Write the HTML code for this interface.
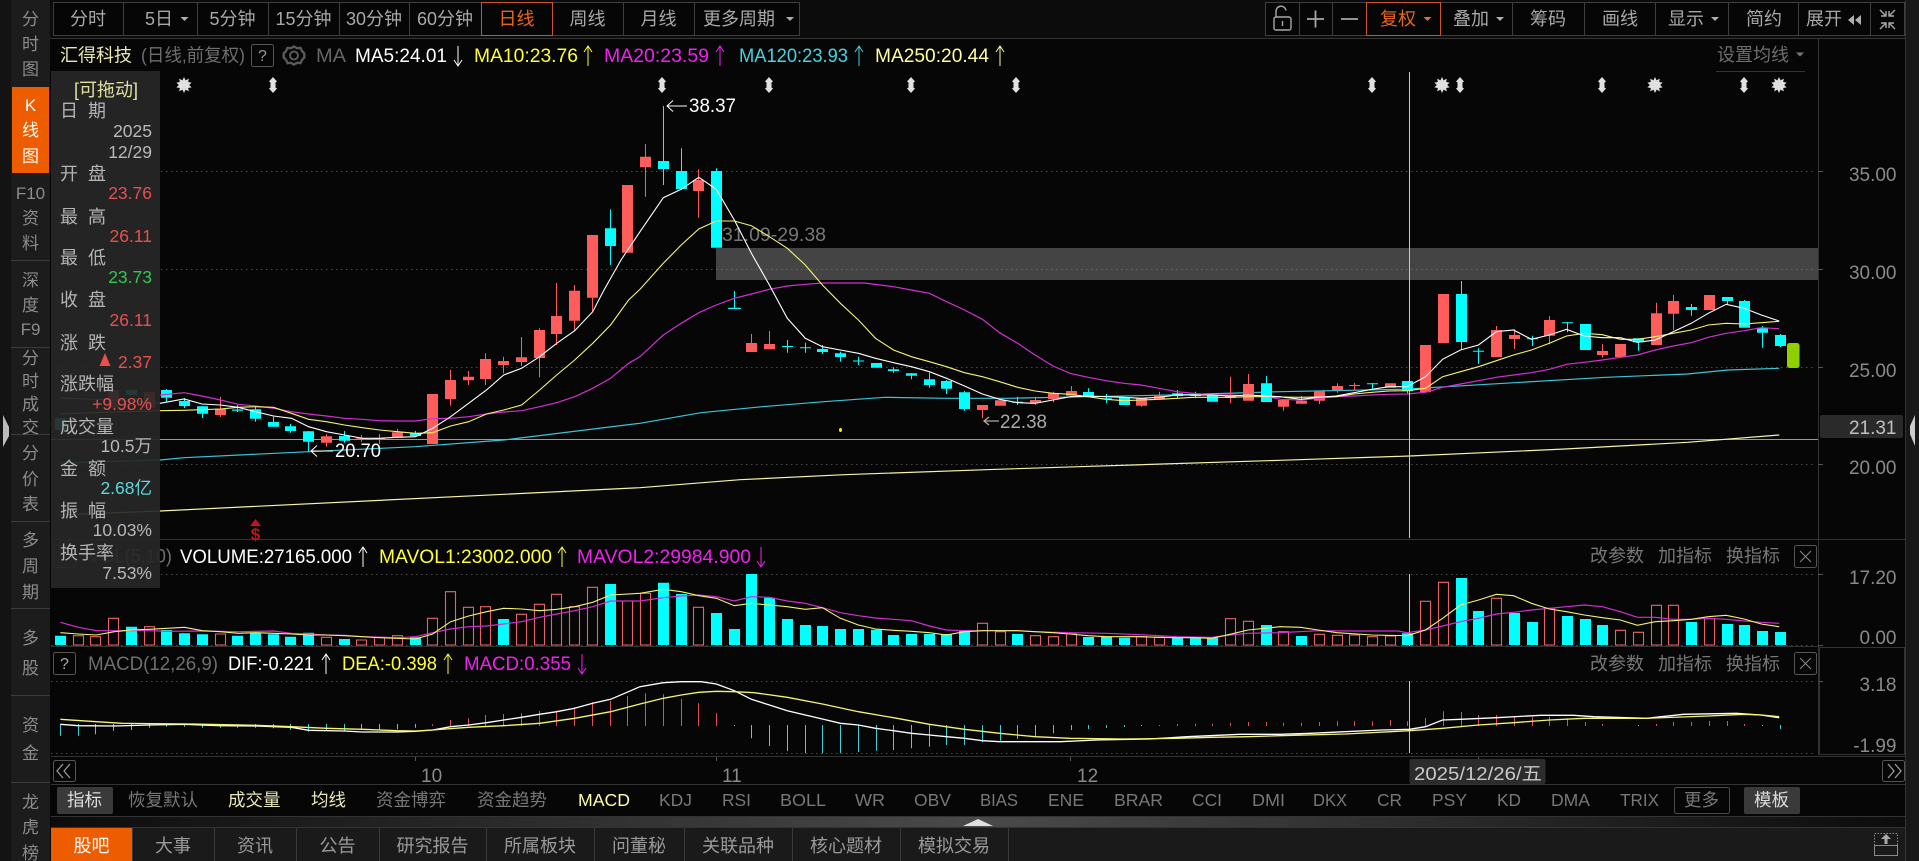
<!DOCTYPE html>
<html lang="zh"><head><meta charset="utf-8"><title>汇得科技 K线图</title>
<style>html,body{margin:0;padding:0;background:#060606;overflow:hidden;width:1919px;height:861px}svg{display:block;font-family:"Liberation Sans","Noto Sans CJK SC",sans-serif}</style></head>
<body>
<svg xmlns="http://www.w3.org/2000/svg" width="1919" height="861" viewBox="0 0 1919 861">
<defs>
<linearGradient id="gs" x1="0" x2="1" y1="0" y2="0"><stop offset="0" stop-color="#0c0c0c"/><stop offset=".5" stop-color="#4a4a4a"/><stop offset="1" stop-color="#0c0c0c"/></linearGradient>
<path id="up" fill="none" d="M0-10V10M-4-4L0-10L4-4"/>
<path id="dn" fill="none" d="M0-10V10M-4 4L0 10L4 4"/>
<path id="star" fill="#e0e0e0" d="M0-8L1.6-4.6L4.8-6.4L4.2-3L7.6-2.4L5.2 0L7.6 2.4L4.2 3L4.8 6.4L1.6 4.6L0 8L-1.6 4.6L-4.8 6.4L-4.2 3L-7.6 2.4L-5.2 0L-7.6-2.4L-4.2-3L-4.8-6.4L-1.6-4.6Z"/>
<path id="ud" fill="#e0e0e0" d="M0-8L4-3.5L2.5-2.5V2.5L4 3.5L0 8L-4 3.5L-2.5 2.5V-2.5L-4-3.5Z"/>
</defs>
<rect width="1919" height="861" fill="#060606"/>
<!-- left strip & sidebar -->
<rect x="0" y="0" width="11" height="861" fill="#131313"/>
<rect x="11" y="0" width="39" height="861" fill="#1c1c1c"/>
<rect x="12" y="87" width="37" height="86" fill="#ee5c00"/>
<path stroke="#3c3c3c" d="M11 260.5H50M11 347.5H50M11 434.5H50M11 521.5H50M11 608.5H50M11 695.5H50M11 782.5H50"/>
<path fill="#bbb" d="M3 415L9 427V436L3 447Z"/>
<g font-size="17" fill="#8c8c8c" text-anchor="middle">
<text x="30.5" y="25">分</text><text x="30.5" y="50">时</text><text x="30.5" y="75">图</text>
<g fill="#fff"><text x="30.5" y="111">K</text><text x="30.5" y="136">线</text><text x="30.5" y="162">图</text></g>
<text x="30.5" y="199">F10</text><text x="30.5" y="224">资</text><text x="30.5" y="249">料</text>
<text x="30.5" y="286">深</text><text x="30.5" y="311">度</text><text x="30.5" y="335">F9</text>
<text x="30.5" y="364">分</text><text x="30.5" y="387">时</text><text x="30.5" y="410">成</text><text x="30.5" y="433">交</text>
<text x="30.5" y="459">分</text><text x="30.5" y="485">价</text><text x="30.5" y="510">表</text>
<text x="30.5" y="546">多</text><text x="30.5" y="572">周</text><text x="30.5" y="598">期</text>
<text x="30.5" y="644">多</text><text x="30.5" y="674">股</text>
<text x="30.5" y="731">资</text><text x="30.5" y="759">金</text>
<text x="30.5" y="808">龙</text><text x="30.5" y="833">虎</text><text x="30.5" y="859">榜</text>
</g>
<!-- top toolbar -->
<rect x="50" y="0" width="1855" height="38" fill="#0c0c0c"/>
<path stroke="#343434" d="M50 38.5H1905M1905.5 0V861"/>
<rect x="1906" y="0" width="13" height="861" fill="#181818"/>
<path fill="#ccc" d="M1915 415L1910 426V434L1915 446Z"/>
<g fill="#060606" stroke="#3e3e3e">
<rect x="53.5" y="2.5" width="70" height="33"/><rect x="123.5" y="2.5" width="74" height="33"/><rect x="197.5" y="2.5" width="71" height="33"/><rect x="268.5" y="2.5" width="71" height="33"/><rect x="339.5" y="2.5" width="70" height="33"/><rect x="409.5" y="2.5" width="72" height="33"/><rect x="552.5" y="2.5" width="71" height="33"/><rect x="623.5" y="2.5" width="71" height="33"/><rect x="694.5" y="2.5" width="105" height="33"/>
<rect x="1265.5" y="2.5" width="34" height="33"/><rect x="1299.5" y="2.5" width="33" height="33"/><rect x="1332.5" y="2.5" width="34" height="33"/><rect x="1440.5" y="2.5" width="72" height="33"/><rect x="1512.5" y="2.5" width="72" height="33"/><rect x="1584.5" y="2.5" width="71" height="33"/><rect x="1655.5" y="2.5" width="73" height="33"/><rect x="1728.5" y="2.5" width="70" height="33"/><rect x="1798.5" y="2.5" width="72" height="33"/><rect x="1870.5" y="2.5" width="34" height="33"/>
</g>
<rect x="481.5" y="2.5" width="71" height="33" fill="#060606" stroke="#c9581e"/>
<rect x="1366.5" y="2.5" width="74" height="33" fill="#060606" stroke="#c9581e"/>
<g font-size="18" fill="#a8a8a8" text-anchor="middle">
<text x="88" y="25">分时</text><text x="159" y="25">5日</text><text x="232.5" y="25">5分钟</text><text x="303.5" y="25">15分钟</text><text x="374" y="25">30分钟</text><text x="445" y="25">60分钟</text>
<text x="516.5" y="25" fill="#e8661a">日线</text><text x="587.5" y="25">周线</text><text x="658.5" y="25">月线</text><text x="739" y="25">更多周期</text>
<text x="1398" y="25" fill="#e8661a">复权</text><text x="1471" y="25">叠加</text><text x="1548" y="25">筹码</text><text x="1620" y="25">画线</text><text x="1686" y="25">显示</text><text x="1764" y="25">简约</text><text x="1824" y="25">展开</text>
</g>
<g fill="#b0b0b0">
<path d="M180.5 17h8l-4 4zM786 17h8l-4 4zM1496 17h8l-4 4zM1711 17h8l-4 4z"/>
<path fill="#ee7020" d="M1423.5 17h8l-4 4z"/>
<path d="M1854 15v10l-6-5zM1861 15v10l-6-5z"/>
</g>
<!-- lock, + - collapse -->
<g fill="none" stroke="#a8a8a8" stroke-width="1.4">
<rect x="1274" y="17" width="17" height="13" rx="2"/><path d="M1276 17v-5a5 5 0 0 1 10-1.5M1282.5 21v5"/>
<path stroke-width="1.8" d="M1307 19h17M1315.5 10.5v17M1341 19h17"/>
<path d="M1880 10l6 6M1886 11v5h-5M1895 10l-6 6M1889 11v5h5M1880 29l6-6M1886 28v-5h-5M1895 29l-6-6M1889 28v-5h5"/>
</g>
<!-- title row -->
<text x="60" y="61.5" font-size="18" fill="#e8e8b4">汇得科技</text>
<text x="141" y="61.5" font-size="18" fill="#6e6e6e" textLength="104" lengthAdjust="spacingAndGlyphs">(日线,前复权)</text>
<rect x="251.5" y="44.5" width="22" height="22" rx="2" fill="none" stroke="#555"/>
<text x="262.5" y="61" font-size="16" fill="#999" text-anchor="middle">?</text>
<g fill="none" stroke="#5a5a5a" stroke-width="2"><circle cx="294" cy="55.5" r="4"/><path stroke-width="2.4" d="M294 46.5l3 1.7 3.5-.3 1.500 3.200 2.300 2.400v4l-2.300 2.400-1.500 3.200-3.500-.3-3 1.700-3-1.700-3.500.3-1.500-3.200-2.300-2.400v-4l2.300-2.400 1.500-3.200 3.500.3z"/></g>
<g font-size="19">
<text x="316" y="62" fill="#666" textLength="30" lengthAdjust="spacingAndGlyphs">MA</text>
<text x="355" y="62" fill="#fff" textLength="92" lengthAdjust="spacingAndGlyphs">MA5:24.01</text>
<text x="474" y="62" fill="#ffff33" textLength="104" lengthAdjust="spacingAndGlyphs">MA10:23.76</text>
<text x="604" y="62" fill="#ee22ee" textLength="105" lengthAdjust="spacingAndGlyphs">MA20:23.59</text>
<text x="739" y="62" fill="#44d4e4" textLength="109" lengthAdjust="spacingAndGlyphs">MA120:23.93</text>
<text x="875" y="62" fill="#ffffa0" textLength="114" lengthAdjust="spacingAndGlyphs">MA250:20.44</text>
</g>
<use href="#dn" x="458" y="56" stroke="#fff"/><use href="#up" x="588" y="56" stroke="#ffff33"/><use href="#up" x="720" y="56" stroke="#ee22ee"/><use href="#up" x="859" y="56" stroke="#44d4e4"/><use href="#up" x="1000" y="56" stroke="#ffffa0"/>
<text x="1717" y="61" font-size="18" fill="#6e6e6e">设置均线</text>
<path fill="#777" d="M1796 52.500h8l-4 4z"/><path stroke="#333" d="M1716 71.500H1805"/>
<!-- axis frames -->
<path stroke="#333" d="M1818.500 38V755M51 539.500H1905M51 646.500H1818M51 756.500H1905M51 784.500H1905M51 816.500H1905M51 827.500H1905"/>
<rect x="1819.500" y="647.500" width="85" height="107" fill="none" stroke="#333"/>
<!-- grid -->
<path stroke="#4a4a4a" stroke-dasharray="1.500 3.500" d="M51 171.500H1816M51 269.500H1816M51 367.500H1816M51 464.500H1816M51 574.500H1816M51 645.500H1816M51 681.500H1816M51 753.500H1816"/>
<path stroke="#555" d="M1818 171.500h5M1818 269.500h5M1818 367.500h5M1818 464.500h5M1818 574.500h5M1818 645.500h5M1818 681.500h5"/>
<!-- zone -->
<rect x="716" y="248" width="1102" height="32" fill="#444"/>
<path stroke="#666" stroke-dasharray="1.500 3.500" d="M716 269.500H1816"/>
<text x="722" y="241" font-size="19" fill="#777" textLength="104" lengthAdjust="spacingAndGlyphs">31.09-29.38</text>
<!-- MA250 + MA120 + hline -->
<path stroke="#9a9a9a" stroke-width="1" d="M51 439.500H1818"/>
<polyline fill="none" stroke="#f4f4a8" stroke-width="1.200" points="60.400,515 160,511 640,487.700 740,479.700 844,474.700 997,469.300 1079,466.700 1280,460.300 1409.600,456 1565,449 1687.500,442.300 1779.200,435"/>
<polyline fill="none" stroke="#3cc4d6" stroke-width="1.200" points="60.400,463 160,460 184,457.700 308.600,451.700 415.500,446.700 503.700,440 640,423.300 701,412.700 762.400,406.700 823.700,401.700 885,397.300 946,398.300 1007,398.300 1089,396.700 1170.600,395 1280,391.700 1402,389.300 1504,383.300 1606,377.300 1687.500,374 1728,370 1779.200,368.300"/>
<!-- hidden candles beneath translucent panel -->
<path fill="none" stroke="#00ffff" stroke-width="11" d="M60.500 418V430M131.500 390V395"/>
<path fill="none" stroke="#ff5c5c" stroke-width="11" d="M113.500 390V408M149.500 392V408"/>
<polyline fill="none" stroke="#c0c0c0" stroke-width="1" points="60.400,398 113,400 160,403.300"/>
<polyline fill="none" stroke="#f4f470" stroke-width="1" points="60.400,414 113,412 160,410.700"/>
<!-- candles -->
<path fill="none" stroke="#00ffff" stroke-width="1" d="M166.500 389V402M184.500 398V408M202.500 406V418M237.500 405V412M255.500 406.700V421.700M273.500 416.700V426.700M290.500 424V432.700M308.500 431V451.700M344.500 431V442.700M415.500 431V436.700M610.500 209.300V265M663.500 106V185M681.500 148.300V190M716.500 168.300V172M734.500 291V308M787.500 340V352.700M805.500 342.700V352.700M822.500 345V354M840.500 351.700V361.700M858.500 356.700V365M893.500 367.300V372.700M911.500 373V379.300M929.500 372.700V387.700M946.500 380V394M964.500 391V410.700M1017.500 396.700V405M1088.500 388.300V393M1106.500 394V403.300M1177.500 390V398.300M1195.500 391.700V398.300M1266.500 376V384M1372.500 383V390M1407.500 381V393.300M1461.500 281V350M1478.500 348.300V364M1532.500 335.700V346M1567.500 322V332.300M1638.500 342V350.700M1691.500 304V315.700M1727.500 301V304M1744.500 300V302M1762.500 326V347.700M1780.500 334V347"/>
<path fill="none" stroke="#ff5c5c" stroke-width="1" d="M220.500 397V417M326.500 434.300V446.700M361.500 435V441.700M379.500 434V444M397.500 429V438.300M450.500 370V405.700M468.500 371V385M485.500 353.300V385M503.500 356.700V373.300M521.500 337V366M539.500 328.300V377.300M556.500 283V345M574.500 285V330.700M592.500 297V311.700M645.500 144V196.700M698.500 169.300V217.700M751.500 334V343M769.500 331V344M982.500 410V418.300M1035.500 396.700V405M1053.500 391.700V402.300M1071.500 386V391M1141.500 405V406.700M1159.500 391.700V400M1230.500 376.700V403.300M1248.500 374V384M1283.500 406V410.700M1301.500 396V404M1319.500 400V404M1337.500 383.300V392.700M1354.500 382.700V390.700M1496.500 326V330M1514.500 329.300V349M1549.500 316V344.300M1602.500 344V357.700M1656.500 302.700V314M1673.500 295V330"/>
<path fill="none" stroke="#00ffff" stroke-width="11" d="M166.500 390V397.700M184.500 401V406M202.500 406.300V413.700M237.500 409.500V410.700M255.500 409.300V418.700M273.500 422V426.700M290.500 426.300V431M308.500 431.300V441.700M344.500 436V440.700M415.500 433.300V436M610.500 228.300V246M663.500 161V169M681.500 171V189M716.500 171V247.700M734.500 307.700V308.700M787.500 346V347M805.500 347.300V348.300M822.500 349V352M840.500 353.300V357M858.500 360.500V361.500M876.500 363V367.700M893.500 369.300V371M911.500 373.300V375.700M929.500 379.300V385M946.500 381V388.700M964.500 392.300V409M1017.500 401.700V402.700M1088.500 392V396.700M1106.500 398.300V399.300M1124.500 397.300V405M1177.500 393.300V396M1195.500 395V396M1212.500 395V401.700M1266.500 383.300V402M1372.500 383.300V384.300M1407.500 381V391.300M1461.500 294V342M1478.500 350.700V351.700M1532.500 338.300V339.300M1567.500 322.300V323.300M1585.500 324V350M1638.500 338.300V342.300M1691.500 307V310M1727.500 297V301M1744.500 301V327.700M1762.500 327.700V332.700M1780.500 335V346"/>
<path fill="none" stroke="#ff5c5c" stroke-width="11" d="M220.500 408.700V415M326.500 436.300V442.700M361.500 438.300V439.700M379.500 438.300V439.700M397.500 432.300V437.300M432.500 394V444M450.500 380V399M468.500 376.700V380.300M485.500 359V379M503.500 361V365M521.500 357.300V362M539.500 330V358M556.500 316V334M574.500 290.700V320.700M592.500 235V297.700M627.500 185V252.700M645.500 156.700V167.300M698.500 180V191M751.500 343V352M769.500 344V349.300M982.500 405V410M1000.500 400.300V405.700M1035.500 400V403M1053.500 393.300V399.300M1071.500 391V395.700M1141.500 398.300V405.700M1159.500 396V399M1230.500 396V398M1248.500 384V400.700M1283.500 400V406.700M1301.500 400.700V403.700M1319.500 391V400.700M1337.500 386V390M1354.500 385V386M1390.500 383.300V387.700M1425.500 345V392.300M1443.500 294V343M1496.500 330V357M1514.500 335V339M1549.500 320V335.700M1602.500 351V355M1620.500 344V357M1656.500 313.300V345M1673.500 301V313.700M1709.500 295V310"/>
<path stroke="#00ffff" stroke-width="1" fill="none" d="M728 308.500H741"/>
<rect x="1787" y="343" width="12.500" height="25" rx="2.500" fill="#90d000"/>
<!-- MA20, MA10, MA5 -->
<polyline fill="none" stroke="#d030d0" stroke-width="1.200" points="160,395 184,392.700 202,396 220.400,400 238.400,404.300 255.500,406 273.500,408.300 291.400,411.700 308.600,414 326.500,416 344.500,418.300 362.400,419.300 379.600,420.700 397.600,421 415.500,421 432.700,418.700 450.600,418.300 468.600,416.700 486.500,414 503.700,412 521.600,410.700 539.600,406.700 556.700,402.700 574.700,396.700 592.700,388.300 610.600,378.300 628.600,363.300 640,356.700 663.300,335 681.200,323.300 698.800,312.700 716.300,305 734.300,298.300 751.400,294 769.400,289.300 787.300,286 805.300,284.300 822.400,283 840.400,283 864.500,283 893.500,286.700 911.400,290 929.400,293.300 946.500,301.700 964.500,310 982.400,319.300 999.600,332.700 1017.600,343.300 1035,355 1053,366 1070,373.300 1088,377.300 1106,380.700 1124,383.300 1141,385 1159,388.300 1177,391.700 1194,393.300 1212,395 1230,395 1248,396 1265,396 1280,399.300 1301,400 1318,398.300 1336,396.700 1354,396 1372,395 1389,394.300 1407,394 1425.500,392.300 1442.600,387.300 1460.500,384 1478.500,380.700 1496.400,377.300 1513.500,375 1531.400,372.700 1549.400,369.300 1566.500,364.300 1584.400,362.300 1602.300,360 1620.300,357.300 1637.400,355 1655.300,350 1673.200,346 1691.200,342.700 1708.300,337.300 1726.200,333.300 1744.100,330.700 1761.300,327.700 1779.200,328.700"/>
<polyline fill="none" stroke="#f4f470" stroke-width="1.100" points="160,410.700 184,410.300 220.400,409 238.400,407.300 255.500,406.700 273.500,407.300 291.400,413.300 308.600,419.300 326.500,421.700 344.500,425 362.400,427.700 379.600,430 397.600,431.700 415.500,433.300 432.700,432.700 450.600,426 468.600,421.700 486.500,414 503.700,410 521.600,405 539.600,390 556.700,375 574.700,360 592.700,343.300 610.600,325 628.600,300 640,289.300 663.300,263.300 681.200,245 698.800,229 716.300,221 734.300,221 751.400,225.700 769.400,236.700 787.300,248.300 805.300,265 822.400,285 840.400,303.300 858.400,320 875.500,338.300 893.500,350 911.400,356.700 929.400,361.700 946.500,366.700 964.500,372.700 982.400,376.700 999.600,381.700 1017.600,387.300 1035,391 1053,393.300 1070,394.300 1088,396.700 1106,399.300 1124,400.700 1141,400 1159,399.300 1177,398.300 1194,397.300 1212,397.300 1230,397.300 1248,396.700 1265,396.700 1280,397 1301,397.300 1336,396.700 1354,394 1372,392.300 1389,391 1407,390.700 1425.500,388.300 1442.600,376.700 1460.500,371.700 1478.500,366.700 1496.400,360.700 1513.500,355 1531.400,350 1549.400,343.300 1566.500,336 1584.400,333.300 1602.300,334.700 1620.300,339.300 1637.400,339.300 1655.300,336.700 1673.200,333.300 1691.200,330 1708.300,325 1726.200,323.300 1744.100,324 1761.300,322.700 1779.200,321.300"/>
<polyline fill="none" stroke="#ffffff" stroke-width="1.100" points="160,403.300 184,399 202,404 220.400,405 238,407.300 255.500,411.700 273.500,416 291.500,418.300 308.600,426.700 326.500,431.700 344.500,435 362.400,438.300 379.600,438.300 397.600,437.300 415.500,436.700 432.700,428.300 450.600,416.700 468.600,403.300 486.500,390 503.700,375 521.600,368.300 539.600,356.700 556.700,343.300 574.700,330.700 592.700,311.700 604,290 621,260 640,231.700 663.300,197.700 681.200,189.300 698.800,177.300 716.300,189.300 734.300,220 751.400,253.300 769.400,285 787.300,318.300 805.300,338.300 822.400,346.700 840.400,350 858.400,353.300 875.500,358.300 893.500,362.700 911.400,366.700 929.400,371.700 946.500,378.300 964.500,386 982.400,394 999.600,399.300 1017.600,402.700 1035,403.300 1053,400 1070,396.700 1088,396 1106,396.700 1124,397.300 1141,398.300 1159,397.300 1177,395 1194,395 1212,395 1230,396 1248,395 1265,396 1280,396.700 1301,399.300 1318,397.300 1336,396 1354,392.700 1372,389.300 1389,386.700 1407,386.700 1425.500,376.700 1442.600,359.300 1460.500,350 1478.500,345 1496.400,331.700 1513.500,330 1531.400,339.300 1549.400,335 1566.500,329.300 1584.400,336 1602.300,337.700 1620.300,337.700 1637.400,342.300 1655.300,340 1673.200,331.700 1691.200,323.300 1708.300,313.300 1726.200,304.300 1744.100,308.300 1761.300,315 1779.200,321"/>
<!-- crosshair -->
<path stroke="#c8c8c8" d="M1409.500 72V538M1409.500 574V646M1409.500 681V753"/>
<!-- markers -->
<use href="#star" x="184" y="85"/><use href="#ud" x="273" y="85"/><use href="#ud" x="662" y="85"/><use href="#ud" x="769" y="85"/><use href="#ud" x="911" y="85"/><use href="#ud" x="1016" y="85"/><use href="#ud" x="1372" y="85"/><use href="#star" x="1442" y="85"/><use href="#ud" x="1460" y="85"/><use href="#ud" x="1602" y="85"/><use href="#star" x="1655" y="85"/><use href="#ud" x="1744" y="85"/><use href="#star" x="1779" y="85"/>
<!-- labels -->
<g fill="none" stroke="#fff"><path d="M687 106H667M673 100.500L667 106L673 111.500"/><path d="M333 451H311M317 445.500L311 451L317 456.500"/></g>
<path fill="none" stroke="#aaa" stroke-width="1.300" d="M999 421H984M989 417L984 421L989 425"/>
<text x="689" y="112" font-size="19" fill="#fff" textLength="47" lengthAdjust="spacingAndGlyphs">38.37</text>
<text x="335" y="457" font-size="19" fill="#fff" textLength="46" lengthAdjust="spacingAndGlyphs">20.70</text>
<text x="1000" y="428" font-size="19" fill="#aaa" textLength="47" lengthAdjust="spacingAndGlyphs">22.38</text>
<ellipse cx="840.500" cy="430" rx="1.500" ry="2" fill="#ffee00"/>
<path fill="#cc1111" d="M255.500 519L261 526H250Z"/><text x="255.500" y="540" font-size="17" font-weight="bold" fill="#cc1111" text-anchor="middle">$</text>
<!-- axis labels -->
<g font-size="19" fill="#8a8a8a" text-anchor="end">
<text x="1896.500" y="181">35.00</text><text x="1896.500" y="279">30.00</text><text x="1896.500" y="377">25.00</text><text x="1896.500" y="474">20.00</text>
<text x="1896.500" y="584">17.20</text><text x="1896.500" y="644">0.00</text><text x="1896.500" y="691">3.18</text><text x="1896.500" y="752">-1.99</text>
</g>
<rect x="1820" y="415" width="83" height="23" rx="2" fill="#2a2a2a"/>
<text x="1896.500" y="434" font-size="19" fill="#c0c0c0" text-anchor="end">21.31</text>
<!-- vol pane -->
<path fill="none" stroke="#00ffff" stroke-width="11" d="M60.500 645V635.700M131.500 645V626.700M166.500 645V630M184.500 645V633.300M202.500 645V634.300M237.500 645V635.700M255.500 645V632.700M273.500 645V634.300M290.500 645V636.700M308.500 645V632.700M344.500 645V639M415.500 645V637.300M503.500 645V619M610.500 645V584M663.500 645V582.700M681.500 645V594M716.500 645V613M734.500 645V629M751.500 645V574M769.500 645V597.700M787.500 645V619M805.500 645V625M822.500 645V626M840.500 645V629M858.500 645V629M876.500 645V629.700M893.500 645V635M911.500 645V634M929.500 645V634M946.500 645V634M964.500 645V630M1017.500 645V634M1088.500 645V637M1106.500 645V636.700M1124.500 645V637.700M1177.500 645V637.700M1195.500 645V637.700M1212.500 645V637.700M1266.500 645V625M1301.500 645V636M1407.500 645V633.300M1461.500 645V578M1478.500 645V611M1514.500 645V613M1532.500 645V622M1567.500 645V616M1585.500 645V619M1602.500 645V625M1691.500 645V622M1727.500 645V624M1744.500 645V625M1762.500 645V631M1780.500 645V632"/>
<path fill="none" stroke="#e86464" stroke-width="1.100" d="M73.500 645V635.700h10V645zM90.500 645V636.700h10V645zM108.500 645V618.300h10V645zM144.500 645V626.700h10V645zM215.500 645V634h10V645zM321.500 645V637.300h10V645zM356.500 645V640h10V645zM374.500 645V637.300h10V645zM392.500 645V635.700h10V645zM427.500 645V618.300h10V645zM445.500 645V591.700h10V645zM463.500 645V607.300h10V645zM480.500 645V606.700h10V645zM516.500 645V614.300h10V645zM534.500 645V604.300h10V645zM551.500 645V594.300h10V645zM569.500 645V606.700h10V645zM587.500 645V587.300h10V645zM622.500 645V601h10V645zM640.500 645V593.300h10V645zM693.500 645V607.300h10V645zM977.500 645V623.300h10V645zM995.500 645V631.700h10V645zM1030.500 645V635.700h10V645zM1048.500 645V636.700h10V645zM1066.500 645V634h10V645zM1136.500 645V636.700h10V645zM1154.500 645V637.300h10V645zM1225.500 645V618.700h10V645zM1243.500 645V621.300h10V645zM1278.500 645V631.700h10V645zM1314.500 645V634.300h10V645zM1332.500 645V635.300h10V645zM1349.500 645V635h10V645zM1367.500 645V636.700h10V645zM1385.500 645V636h10V645zM1420.500 645V601.300h10V645zM1438.500 645V582.300h10V645zM1491.500 645V598.300h10V645zM1544.500 645V608.300h10V645zM1615.500 645V630.300h10V645zM1633.500 645V632.300h10V645zM1651.500 645V605.300h10V645zM1668.500 645V605.300h10V645zM1704.500 645V618.700h10V645z"/>
<polyline fill="none" stroke="#d030d0" stroke-width="1.200" points="60.400,622.300 78.400,627.300 96.300,630.700 114.300,630.700 149.400,630.700 167.300,631.300 202.400,631 238.400,631.700 273.500,631 291.400,633.300 308.600,634 326.500,635 344.500,635.300 362.400,636.700 397.600,637.700 415.500,636.700 432.700,632.700 450.600,629 468.600,626.700 486.500,626 503.700,624 521.600,621.700 539.600,617.300 556.700,614 574.700,610.700 592.700,606.700 610.600,601 640,601 663.300,597.700 681.200,596 698.800,595 716.300,596.700 734.300,601 751.400,596.700 769.400,597.300 787.300,601 805.300,603.300 822.400,607.700 840.400,612.700 858.400,615.700 875.500,618 893.500,619.300 911.400,620.700 929.400,626 946.500,630 964.500,630.700 1017.600,630.700 1035,631.700 1070,632.700 1106,633.300 1141,634.700 1177,636.700 1212,637.300 1230,635 1248,633.300 1280,632.700 1318.300,630.700 1354,631 1398,631 1407,632.700 1425.500,630 1442.600,626 1460.500,621.700 1478.500,618.300 1496.400,614 1513.500,612.300 1531.400,610 1549.400,608.300 1566.500,606.700 1584.400,605 1602.300,606.700 1620.300,611.700 1637.400,617.300 1655.300,617.300 1673.200,619.300 1691.200,619.300 1708.300,618.300 1726.200,619.300 1744.100,621 1761.300,622.300 1779.200,623.300"/>
<polyline fill="none" stroke="#f4f470" stroke-width="1.100" points="60.400,632.700 78.400,634 96.300,635 114.300,631.700 131.400,630 149.400,629.300 167.300,628.300 184.500,627.300 202.400,630.700 220.400,631.700 238.400,633.300 255.500,632.700 273.500,633.300 291.400,634 308.600,635 326.500,635 344.500,635.700 362.400,636.700 379.600,637.700 397.600,638.300 415.500,639 432.700,634 450.600,621.700 468.600,616 486.500,611.700 503.700,608.300 521.600,609 539.600,610.700 556.700,609.300 574.700,606.700 592.700,602.300 610.600,595 640,593.300 663.300,589.300 681.200,591.700 698.800,595.700 716.300,598.300 734.300,605.700 751.400,603.300 769.400,605 787.300,606.700 805.300,609.300 822.400,607.700 840.400,618.300 858.400,625 875.500,629 893.500,630.300 911.400,631.300 929.400,632.700 946.500,635 964.500,631.700 982.400,630.700 999.600,630.700 1017.600,630.700 1035,631.700 1053,632.700 1070,634 1088,635.700 1106,636.700 1124,636.700 1141,636.700 1159,637.300 1177,637.700 1194,637.700 1212,638.300 1230,634.300 1248,630 1265,628.300 1280,626.700 1300.400,627.300 1318.300,630 1337,632.700 1372,635 1407,635.700 1425.500,630 1442.600,618.300 1460.500,605 1478.500,600 1496.400,594.300 1513.500,595.700 1531.400,603.300 1549.400,609 1566.500,611.700 1584.400,615 1602.300,617.700 1620.300,620 1637.400,625.300 1655.300,621.700 1673.200,620.700 1691.200,619.300 1708.300,616.700 1726.200,615.300 1744.100,619 1761.300,624 1779.200,626.700"/>
<!-- vol header -->
<rect x="53.500" y="545.500" width="22" height="22" rx="2" fill="none" stroke="#555"/>
<text x="88" y="562.500" font-size="19" fill="#6e6e6e" textLength="84" lengthAdjust="spacingAndGlyphs">VOL(5,10)</text>
<g font-size="19">
<text x="180" y="563" fill="#fff" textLength="172" lengthAdjust="spacingAndGlyphs">VOLUME:27165.000</text>
<text x="379" y="563" fill="#ffff33" textLength="173" lengthAdjust="spacingAndGlyphs">MAVOL1:23002.000</text>
<text x="577" y="563" fill="#ee22ee" textLength="174" lengthAdjust="spacingAndGlyphs">MAVOL2:29984.900</text>
</g>
<use href="#up" x="363" y="557" stroke="#fff"/><use href="#up" x="562" y="557" stroke="#ffff33"/><use href="#dn" x="761" y="557" stroke="#ee22ee"/>
<g font-size="18" fill="#777">
<text x="1590" y="562">改参数</text><text x="1658" y="562">加指标</text><text x="1726" y="562">换指标</text>
<text x="1590" y="670">改参数</text><text x="1658" y="670">加指标</text><text x="1726" y="670">换指标</text>
</g>
<g fill="none" stroke="#555"><rect x="1794.500" y="545.500" width="22" height="22" rx="2"/><rect x="1794.500" y="652.500" width="22" height="22" rx="2"/></g>
<path fill="none" stroke="#888" d="M1800 551l11 11M1811 551l-11 11M1800 658l11 11M1811 658l-11 11"/>
<!-- macd pane -->
<rect x="53.500" y="652.500" width="22" height="22" rx="2" fill="none" stroke="#555"/>
<text x="64.500" y="669" font-size="16" fill="#aaa" text-anchor="middle">?</text>
<g font-size="19">
<text x="88" y="670" fill="#6e6e6e" textLength="130" lengthAdjust="spacingAndGlyphs">MACD(12,26,9)</text>
<text x="228" y="670" fill="#fff" textLength="86" lengthAdjust="spacingAndGlyphs">DIF:-0.221</text>
<text x="342" y="670" fill="#ffff33" textLength="95" lengthAdjust="spacingAndGlyphs">DEA:-0.398</text>
<text x="464" y="670" fill="#ee22ee" textLength="107" lengthAdjust="spacingAndGlyphs">MACD:0.355</text>
</g>
<use href="#up" x="326" y="664" stroke="#fff"/><use href="#up" x="448" y="664" stroke="#ffff33"/><use href="#dn" x="582" y="664" stroke="#ee22ee"/>
<path fill="none" stroke="#40d0d8" d="M60.500 724V735.700M78.500 724V735.700M95.500 724V734.300M113.500 724V731M131.500 724V730M149.500 724V727.700M166.500 724V726.700M184.500 724V726.700M202.500 724V727.700M220.500 724V727.700M237.500 724V727.700M255.500 724V727.700M273.500 724V728.300M290.500 724V730M308.500 724V731.700M326.500 724V731M344.500 724V731M361.500 724V730M379.500 724V729.300M397.500 724V729.300M415.500 724V727.700M734.500 725V726M751.500 725V738.300M769.500 725V746M787.500 725V751M805.500 725V753.300M822.500 725V753.300M840.500 725V753.300M858.500 725V752M876.500 725V750.700M893.500 725V750M911.500 725V748.300M929.500 725V746.700M946.500 725V745M964.500 725V745M982.500 725V742.300M1000.500 725V740.700M1017.500 725V739M1035.500 725V736.700M1053.500 725V733.300M1071.500 725V730M1088.500 725V729M1106.500 725V728M1124.500 725V727M1141.500 725V726M1638.500 725V726M1762.500 725V726M1780.500 725V729"/>
<path fill="none" stroke="#e05050" d="M432.500 726V724.300M450.500 726V720M468.500 726V718.300M485.500 726V715M503.500 726V714M521.500 726V713.300M539.500 726V711M556.500 726V710.700M574.500 726V707.300M592.500 726V702.300M610.500 726V700.700M627.500 726V696M645.500 726V693.300M663.500 726V694.300M681.500 726V699M698.500 726V703.300M716.500 726V713.300M1159.500 726V725M1177.500 726V724M1195.500 726V723.700M1212.500 726V723.700M1230.500 726V722.700M1248.500 726V722M1266.500 726V722M1283.500 726V722.700M1301.500 726V722.700M1319.500 726V722M1337.500 726V721.300M1354.500 726V721.300M1372.500 726V721.300M1390.500 726V720M1407.500 726V721.300M1425.500 726V718M1443.500 726V711.300M1461.500 726V712M1478.500 726V715M1496.500 726V715M1514.500 726V716.700M1532.500 726V717.300M1549.500 726V716.700M1567.500 726V718.300M1585.500 726V722M1602.500 726V724M1656.500 726V724M1673.500 726V721.700M1691.500 726V721.700M1709.500 726V721M1727.500 726V721M1744.500 726V724"/>
<polyline fill="none" stroke="#fff" stroke-width="1.300" points="60.400,724.300 78.400,725.700 114.300,726 149.400,725 184.500,724.300 220.400,725.700 255.500,726 291.400,727.300 308.600,730.300 344.500,731 362.400,732 397.600,732 415.500,731.300 432.700,730 450.600,726.700 468.600,725 486.500,722.700 503.700,720 521.600,717.300 539.600,714.300 556.700,711.700 574.700,708.300 592.700,703.300 610.600,699.300 640,686.700 663.300,682.700 681.200,681.700 701.200,681.700 716.300,684 734.300,690.700 751.400,699.300 769.400,705 787.300,710.700 805.300,715 822.400,719 840.400,723.300 858.400,725 875.500,728.300 893.500,730.700 911.400,733.300 929.400,735 946.500,736.700 964.500,738.300 982.400,740.700 999.600,741.700 1060.400,741.700 1097,740 1150,739 1187,736.700 1240,734.300 1280,734.300 1310.600,733.300 1345,731.700 1382,730 1409.600,729.300 1425.500,726.700 1442.600,720 1460.500,719.300 1496.400,717.700 1540.800,715.300 1573.400,715.300 1593.800,716.700 1646.700,718.300 1683.400,714.300 1736.400,713.300 1760.800,715 1779.200,717.700"/>
<polyline fill="none" stroke="#f4f470" stroke-width="1.300" points="60.400,719.300 96.300,721.700 122.400,723.300 193.500,724 255.500,725.300 291.400,726.700 326.500,728.300 362.400,729.300 397.600,730.700 415.500,731 432.700,730 468.600,727.300 503.700,725.700 539.600,723.300 574.700,718.300 610.600,711.700 640,704 663.300,698.300 681.200,695 698.800,692.300 716.300,691.300 734.300,691.700 754.300,692.700 787.300,697.300 822.400,704 858.400,711.700 893.500,717.700 929.400,724.300 964.500,729.300 999.600,733.300 1035,736.700 1070,738.300 1124,739 1177,738.300 1212,737.300 1248,736.700 1280,735.700 1345,734 1409.600,730.700 1442.600,728.300 1478.500,725 1513.500,722.700 1549.400,720 1584.400,718.300 1646.700,718.300 1708.300,716 1744.100,714.300 1761.300,715 1779.200,716.700"/>
<!-- x axis -->
<path stroke="#555" d="M415.500 757v4M716.500 757v4M1070.500 757v4M1478.500 757v4"/>
<g font-size="19" fill="#8a8a8a"><text x="421" y="782">10</text><text x="722" y="782">11</text><text x="1077" y="782">12</text></g>
<rect x="1409.500" y="759" width="136" height="25" rx="2" fill="#2c2c2c"/>
<text x="1414" y="780" font-size="18" fill="#c8c8c8" textLength="128" lengthAdjust="spacingAndGlyphs">2025/12/26/五</text>
<g fill="none" stroke="#555"><rect x="53.500" y="760.500" width="22" height="21" rx="2"/><rect x="1882.500" y="760.500" width="22" height="21" rx="2"/></g>
<path fill="none" stroke="#999" stroke-width="1.300" d="M63 764l-6 7 6 7M70 764l-6 7 6 7M1888 764l6 7-6 7M1895 764l6 7-6 7"/>
<!-- tab row -->
<rect x="57" y="787" width="56" height="27" rx="2" fill="#3a3a3a"/>
<rect x="1674.500" y="787.500" width="55" height="26" rx="2" fill="none" stroke="#4a4a4a"/>
<rect x="1744" y="787" width="56" height="27" rx="2" fill="#3a3a3a"/>
<g font-size="17.500" fill="#777">
<text x="67" y="806" fill="#ddd">指标</text><text x="128" y="806">恢复默认</text>
<g fill="#e8e8b4"><text x="228" y="806">成交量</text><text x="311" y="806">均线</text></g>
<text x="376" y="806">资金博弈</text><text x="477" y="806">资金趋势</text>
<text x="578" y="806" fill="#ffffa8" textLength="52" lengthAdjust="spacingAndGlyphs">MACD</text>
<text x="659" y="806" textLength="33" lengthAdjust="spacingAndGlyphs">KDJ</text><text x="722" y="806" textLength="29" lengthAdjust="spacingAndGlyphs">RSI</text><text x="780" y="806" textLength="46" lengthAdjust="spacingAndGlyphs">BOLL</text><text x="855" y="806" textLength="30" lengthAdjust="spacingAndGlyphs">WR</text><text x="914" y="806" textLength="37" lengthAdjust="spacingAndGlyphs">OBV</text><text x="980" y="806" textLength="38" lengthAdjust="spacingAndGlyphs">BIAS</text><text x="1048" y="806" textLength="36" lengthAdjust="spacingAndGlyphs">ENE</text><text x="1114" y="806" textLength="49" lengthAdjust="spacingAndGlyphs">BRAR</text><text x="1192" y="806" textLength="30" lengthAdjust="spacingAndGlyphs">CCI</text><text x="1252" y="806" textLength="33" lengthAdjust="spacingAndGlyphs">DMI</text><text x="1313" y="806" textLength="34" lengthAdjust="spacingAndGlyphs">DKX</text><text x="1377" y="806" textLength="25" lengthAdjust="spacingAndGlyphs">CR</text><text x="1432" y="806" textLength="35" lengthAdjust="spacingAndGlyphs">PSY</text><text x="1497" y="806" textLength="24" lengthAdjust="spacingAndGlyphs">KD</text><text x="1551" y="806" textLength="39" lengthAdjust="spacingAndGlyphs">DMA</text><text x="1620" y="806" textLength="39" lengthAdjust="spacingAndGlyphs">TRIX</text>
<text x="1684" y="806">更多</text><text x="1754" y="806" fill="#ddd">模板</text>
</g>
<!-- strip & bottom tabs -->
<rect x="51" y="817" width="1854" height="10" fill="url(#gs)"/>
<path fill="#e0e0e0" d="M963 826L978 819L993 826Z"/>
<rect x="51" y="828" width="1854" height="33" fill="#1a1a1a"/>
<rect x="51" y="828" width="81" height="33" fill="#ee5c00"/>
<path stroke="#3a3a3a" d="M132.500 828V861M214.500 828V861M296.500 828V861M379.500 828V861M486.500 828V861M594.500 828V861M684.500 828V861M792.500 828V861M900.500 828V861M1008.500 828V861"/>
<g font-size="18" fill="#9a9a9a" text-anchor="middle">
<text x="91.500" y="852" fill="#fff">股吧</text><text x="173" y="852">大事</text><text x="255" y="852">资讯</text><text x="337.500" y="852">公告</text><text x="432.500" y="852">研究报告</text><text x="540" y="852">所属板块</text><text x="639" y="852">问董秘</text><text x="738" y="852">关联品种</text><text x="846" y="852">核心题材</text><text x="954" y="852">模拟交易</text>
</g>
<g fill="none" stroke="#8a8a8a"><rect x="1874.500" y="845.500" width="23" height="10"/><rect x="1874.500" y="833.500" width="23" height="22" stroke-dasharray="1.500 1.500"/></g>
<path fill="#aaa" d="M1886 834l5 5h-3.500v5h-3v-5H1881z"/>
<!-- floating panel (translucent) -->
<rect x="51" y="71" width="109" height="517" fill="#272727" fill-opacity=".92"/>
<g font-size="18" fill="#b4b4b4">
<text x="106" y="96" text-anchor="middle" fill="#e2e2a0">[可拖动]</text>
<text x="60" y="117">日</text><text x="88" y="117">期</text>
<text x="60" y="180">开</text><text x="88" y="180">盘</text>
<text x="60" y="223">最</text><text x="88" y="223">高</text>
<text x="60" y="264">最</text><text x="88" y="264">低</text>
<text x="60" y="306">收</text><text x="88" y="306">盘</text>
<text x="60" y="349">涨</text><text x="88" y="349">跌</text>
<text x="60" y="390">涨跌幅</text><text x="60" y="433">成交量</text>
<text x="60" y="475">金</text><text x="88" y="475">额</text>
<text x="60" y="517">振</text><text x="88" y="517">幅</text>
<text x="60" y="559">换手率</text>
</g>
<g font-size="17.500" fill="#b8b8b8" text-anchor="end">
<text x="152" y="137">2025</text><text x="152" y="158">12/29</text>
<text x="152" y="199" fill="#e85050">23.76</text><text x="152" y="242" fill="#e85050">26.11</text>
<text x="152" y="283" fill="#32c850">23.73</text><text x="152" y="326" fill="#e85050">26.11</text>
<text x="152" y="368" fill="#e85050">2.37</text><text x="152" y="410" fill="#e85050">+9.98%</text>
<text x="152" y="452">10.5万</text><text x="152" y="494" fill="#5fd8d8">2.68亿</text>
<text x="152" y="536">10.03%</text><text x="152" y="579">7.53%</text>
</g>
<path fill="#e85050" d="M105 353L110.500 366H99.500Z"/>
</svg>
</body></html>
